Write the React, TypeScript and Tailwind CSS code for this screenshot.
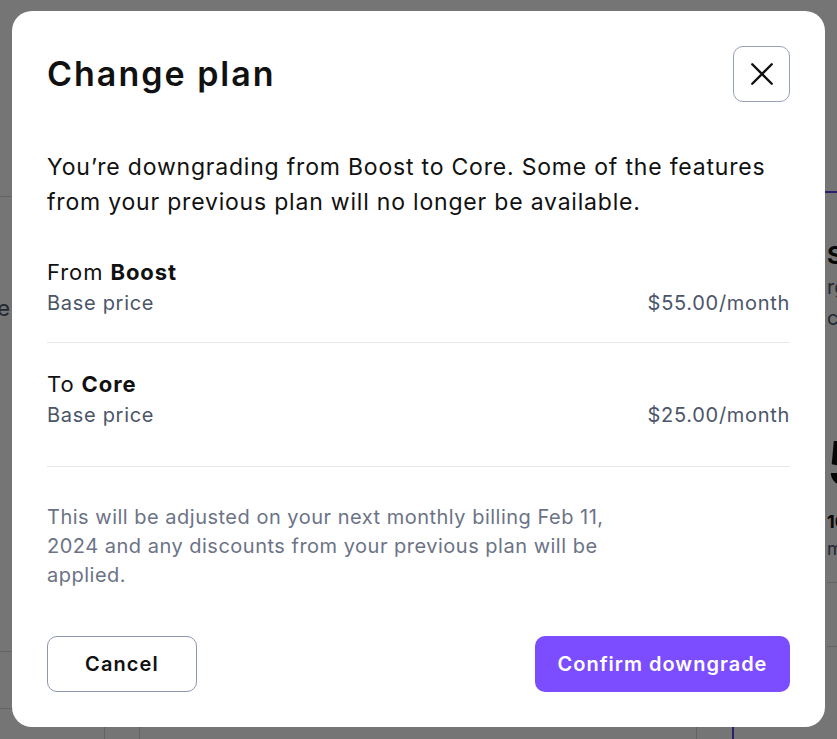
import React from 'react';

const XIcon = () => (
  <svg width="26" height="26" viewBox="0 0 24 24" fill="none" stroke="currentColor" strokeWidth="2.2" strokeLinecap="round">
    <path d="M3 3l18 18M21 3L3 21" />
  </svg>
);

const PriceBlock: React.FC<{ prefix: string; plan: string; price: string; className?: string }> = ({ prefix, plan, price, className }) => (
  <div className={className}>
    <p className="text-[22px] leading-[31px] tracking-[0.9px] text-[#111111]">
      {prefix} <span className="font-bold">{plan}</span>
    </p>
    <div className="flex items-center justify-between text-[20px] leading-[31px] tracking-[0.7px] text-[#4b5569]">
      <span>Base price</span>
      <span>{price}</span>
    </div>
  </div>
);

// faded page behind the dialog, mostly hidden
const BackgroundPage = () => (
  <div className="flex h-[739px] w-full overflow-hidden whitespace-nowrap bg-white">
    <div className="w-[825px] shrink-0">
      <div className="h-[197px] border-b border-[#d8dbe2]" />
      <p className="-ml-[60px] mt-[95px] text-[22px] text-[#4b5569]">Teame</p>
      <div className="mt-[270px] h-[57px] border-b border-[#d8dbe2]" />
      <div className="h-[57px] border-b border-[#d8dbe2]" />
      <div className="flex h-[70px]">
        <div className="w-[105px] border-r border-[#d8dbe2]" />
        <div className="w-[35px] border-r border-[#d8dbe2]" />
        <div className="w-[557px] border-r border-[#d8dbe2] pl-[114px] pt-[40px] text-[16px] text-[#111]">Include</div>
        <div className="w-[37px] border-r-2 border-[#6a3ff0]" />
      </div>
    </div>
    <div className="min-w-0 flex-1">
      <div className="mt-[191px] border-t-2 border-[#6a3ff0] pt-[48px] pl-[2px]">
        <p className="text-[24px] leading-[30px] font-bold text-[#111]">Scale</p>
        <p className="text-[20px] leading-[32px] text-[#4b5569]">rge teams</p>
        <p className="text-[20px] leading-[30px] text-[#4b5569]">cale</p>
        <p className="mt-[95px] text-[60px] leading-[70px] font-bold text-[#111]">55</p>
        <p className="mt-[10px] text-[18px] font-bold text-[#111]">10 users</p>
        <p className="text-[18px] text-[#4b5569]">month</p>
        <div className="mt-[20px] h-[65px] border-y border-[#d8dbe2]" />
      </div>
    </div>
  </div>
);

const App: React.FC = () => {
  return (
    <div className="relative h-[739px] w-[837px] overflow-hidden font-['Inter','Noto_Sans',sans-serif]">
      <BackgroundPage />

      <div className="fixed inset-0 bg-black/[0.54]">
        <div className="mx-auto mt-[11px] w-[813px] rounded-[20px] bg-white px-[35px] pt-[35px] pb-[35px]">
          <div className="flex items-center justify-between">
            <h2 className="text-[34px] font-semibold leading-[40px] tracking-[2px] text-[#111111]">Change plan</h2>
            <button className="flex h-[56px] w-[57px] items-center justify-center rounded-[10px] border border-[#97a0ba] text-[#111111]">
              <XIcon />
            </button>
          </div>

          <p className="mt-[48px] text-[23px] leading-[35px] tracking-[0.8px] text-[#111111]">
            You’re downgrading from Boost to Core. Some of the features
            <br />
            from your previous plan will no longer be available.
          </p>

          <PriceBlock className="mt-[37px] border-b border-[#e4e7ec] pb-[23px]" prefix="From" plan="Boost" price="$55.00/month" />
          <PriceBlock className="border-b border-[#e4e7ec] pt-[26px] pb-[35px]" prefix="To" plan="Core" price="$25.00/month" />

          <p className="mt-[36px] text-[20px] leading-[29px] tracking-[0.5px] text-[#6b7386]">
            This will be adjusted on your next monthly billing Feb 11,
            <br />
            2024 and any discounts from your previous plan will be
            <br />
            applied.
          </p>

          <div className="mt-[46px] flex items-center justify-between">
            <button className="h-[56px] w-[150px] rounded-[10px] border border-[#8e97b1] text-[20px] font-semibold tracking-[1.1px] text-[#111111]">
              Cancel
            </button>
            <button className="h-[56px] w-[255px] rounded-[10px] bg-[#7b4dff] text-[20px] font-semibold tracking-[1px] text-white">
              Confirm downgrade
            </button>
          </div>
        </div>
      </div>
    </div>
  );
};

export default App;
